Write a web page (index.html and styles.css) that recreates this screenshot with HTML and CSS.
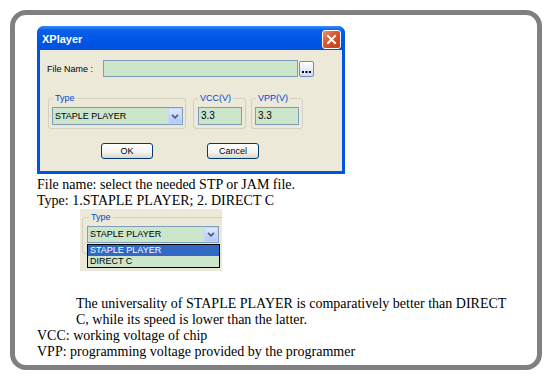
FILE: index.html
```html
<!DOCTYPE html>
<html lang="en">
<head>
  <meta charset="UTF-8" />
  <title>XPlayer</title>
  <link rel="stylesheet" href="styles.css">
</head>
<body>
  <div class="frame">
    <div class="xp-window">
      <div class="titlebar">
        <span class="title">XPlayer</span>
        <span class="close-btn">
          <svg width="11" height="11" viewBox="0 0 11 11"><path d="M2 2 L9 9 M9 2 L2 9" stroke="#fff" stroke-width="2" stroke-linecap="square"/></svg>
        </span>
      </div>
      <div class="win-body">
        <div class="file-row">
          <span class="label">File Name :</span>
          <div class="field file-field"></div>
          <span class="browse-btn">
            <svg width="9" height="2" viewBox="0 0 9 2"><rect x="0" y="0" width="2" height="2" fill="#000"/><rect x="3.5" y="0" width="2" height="2" fill="#000"/><rect x="7" y="0" width="2" height="2" fill="#000"/></svg>
          </span>
        </div>
        <div class="group-row">
          <fieldset class="group type-group">
            <legend>Type</legend>
            <div class="combo">
              <span class="combo-text">STAPLE PLAYER</span>
              <span class="combo-arrow"><svg width="8" height="5" viewBox="0 0 8 5"><path d="M1 0.8 L4 3.8 L7 0.8" fill="none" stroke="#4d6185" stroke-width="1.8"/></svg></span>
            </div>
          </fieldset>
          <fieldset class="group vcc-group">
            <legend>VCC(V)</legend>
            <div class="field small-field">3.3</div>
          </fieldset>
          <fieldset class="group vpp-group">
            <legend>VPP(V)</legend>
            <div class="field small-field">3.3</div>
          </fieldset>
        </div>
        <div class="btn-row">
          <span class="xp-btn">OK</span>
          <span class="xp-btn">Cancel</span>
        </div>
      </div>
    </div>

    <div class="notes">
      <div>File name: select the needed STP or JAM file.</div>
      <div>Type: 1.STAPLE PLAYER; 2. DIRECT C</div>
    </div>

    <div class="shot">
      <fieldset class="group shot-group">
        <legend>Type</legend>
        <div class="combo shot-combo">
          <span class="combo-text">STAPLE PLAYER</span>
          <span class="combo-arrow"><svg width="8" height="5" viewBox="0 0 8 5"><path d="M1 0.8 L4 3.8 L7 0.8" fill="none" stroke="#4d6185" stroke-width="1.8"/></svg></span>
          <ul class="combo-list">
            <li class="selected">STAPLE PLAYER</li>
            <li>DIRECT C</li>
          </ul>
        </div>
      </fieldset>
    </div>

    <p class="notes indent">The universality of STAPLE PLAYER is comparatively better than DIRECT C, while its speed is lower than the latter.</p>
    <div class="notes tight">
      <div>VCC: working voltage of chip</div>
      <div>VPP: programming voltage provided by the programmer</div>
    </div>
  </div>
</body>
</html>
```

FILE: styles.css
```css
body {
  margin: 0;
  background: #fff;
  font-family: "Liberation Serif", "Times New Roman", serif;
  color: #000;
}

.frame {
  box-sizing: border-box;
  width: 532px;
  height: 360px;
  margin: 10px;
  border: 5px solid #808080;
  border-radius: 16px;
  padding: 11px 0 0 22px;
}

/* XP style dialog */
.xp-window {
  box-sizing: border-box;
  width: 308px;
  height: 148px;
  padding: 0 3px 3px;
  background: #0054e3;
  border-radius: 7px 7px 0 0;
  display: flex;
  flex-direction: column;
  font-family: "Liberation Sans", Arial, sans-serif;
  font-size: 9px;
}

.titlebar {
  height: 24px;
  margin: 0 -3px;
  padding: 0 4px 0 5px;
  display: flex;
  align-items: center;
  justify-content: space-between;
  background: linear-gradient(#3d8ef8, #0a5fe9 4px, #0056e6 60%, #0050dc);
  border-radius: 7px 7px 0 0;
  color: #fff;
}

.title {
  font-size: 11px;
  font-weight: bold;
  margin-top: 2px;
}

.close-btn {
  width: 17px;
  height: 17px;
  margin-top: 3px;
  border: 1px solid #fff;
  border-radius: 3px;
  background: linear-gradient(135deg, #ec9472, #d8552f 45%, #c3401c);
  display: flex;
  align-items: center;
  justify-content: center;
}

.win-body {
  flex: 1;
  background: #ece9d8;
  padding: 10px 0 0 7px;
}

.file-row {
  display: flex;
  align-items: center;
  height: 17px;
}

.label {
  width: 56px;
}

.field {
  box-sizing: border-box;
  height: 17px;
  border: 1px solid #7f9db9;
  background: #cce6cc;
  padding-left: 2px;
  line-height: 16px;
}

.file-field {
  width: 195px;
}

.browse-btn {
  box-sizing: border-box;
  width: 15px;
  height: 16px;
  margin-left: 1px;
  padding-bottom: 3px;
  border: 1px solid #6d8cc6;
  border-radius: 2px;
  background: linear-gradient(#fdfeff, #d0dcf6);
  display: flex;
  align-items: flex-end;
  justify-content: center;
}

.group-row {
  display: flex;
  margin-top: 18px;
  padding-left: 1px;
}

.group {
  margin: 0;
  min-width: 0;
  box-sizing: border-box;
  border: 1px solid #d3d0c2;
  border-radius: 3px;
  padding: 6px 2px 3px 3px;
}

.group legend {
  padding: 0 2px;
  margin-left: 1px;
  font-size: 9px;
  line-height: 6px;
  color: #0046d5;
}

.type-group {
  width: 138px;
}

.vcc-group {
  width: 53px;
  margin-left: 7px;
  padding: 6px 3px 3px 4px;
}

.vcc-group legend {
  margin-left: 0;
}

.vpp-group {
  width: 52px;
  margin-left: 5px;
  padding: 6px 3px 3px 3px;
}

.small-field {
  width: 44px;
  height: 18px;
  font-size: 10px;
}

.combo {
  box-sizing: border-box;
  width: 131px;
  height: 18px;
  border: 1px solid #7f9db9;
  background: #cce6cc;
  display: flex;
}

.combo-text {
  flex: 1;
  padding-left: 2px;
  line-height: 16px;
}

.combo-arrow {
  box-sizing: border-box;
  width: 14px;
  border: 1px solid #c6d5fb;
  border-radius: 2px;
  background: linear-gradient(#dfe8fd, #b4c8f5);
  display: flex;
  align-items: center;
  justify-content: center;
}

.btn-row {
  display: flex;
  gap: 54px;
  margin-top: 14px;
  padding-left: 54px;
}

.xp-btn {
  box-sizing: border-box;
  width: 52px;
  height: 16px;
  border: 1px solid #003c74;
  border-radius: 3px;
  background: linear-gradient(#ffffff, #f4f3ee 60%, #d9d5ca);
  display: flex;
  align-items: center;
  justify-content: center;
}

/* text below */
.notes {
  font-size: 14px;
  line-height: 16px;
  margin: 3px 0 0;
}

.indent {
  width: 440px;
  margin: 25px 0 0 39px;
}

.tight {
  margin-top: 0;
}

/* dropdown screenshot */
.shot {
  box-sizing: border-box;
  width: 142px;
  height: 62px;
  margin-left: 43px;
  padding: 5px 0 0 2px;
  background: #ece9d8;
  overflow: hidden;
  font-family: "Liberation Sans", Arial, sans-serif;
  font-size: 9px;
}

.shot-group {
  width: 170px;
  height: 40px;
  padding: 6px 0 0 4px;
}

.shot-group legend {
  margin-left: 2px;
}

.shot-combo {
  position: relative;
  width: 132px;
  height: 17px;
}

.shot-combo .combo-text {
  line-height: 15px;
}

.combo-list {
  position: absolute;
  top: 17px;
  left: -1px;
  box-sizing: border-box;
  width: 133px;
  margin: 0;
  padding: 0;
  list-style: none;
  border: 1px solid #000;
  background: #cce6cc;
}

.combo-list li {
  height: 11px;
  line-height: 11px;
  padding-left: 2px;
}

.combo-list .selected {
  background: #316ac5;
  color: #fff;
}
```
